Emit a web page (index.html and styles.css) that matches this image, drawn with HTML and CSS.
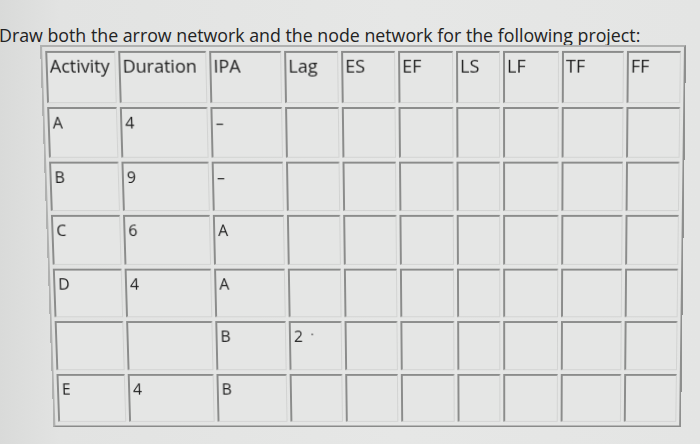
FILE: index.html
```html
<!DOCTYPE html>
<html>
<head>
<meta charset="utf-8">
<link rel="stylesheet" href="styles.css">
</head>
<body>
<div class="page">
  <p class="title">Draw both the arrow network and the node network for the following project:</p>
  <table class="grid">
    <colgroup>
      <col class="c-act"><col class="c-dur"><col class="c-ipa"><col class="c-lag"><col class="c-es">
      <col class="c-ef"><col class="c-ls"><col class="c-lf"><col class="c-tf"><col class="c-ff">
    </colgroup>
    <tr class="head">
      <td>Activity</td><td>Duration</td><td>IPA</td><td>Lag</td><td>ES</td>
      <td>EF</td><td>LS</td><td>LF</td><td>TF</td><td>FF</td>
    </tr>
    <tr><td>A</td><td>4</td><td>–</td><td></td><td></td><td></td><td></td><td></td><td></td><td></td></tr>
    <tr><td>B</td><td>9</td><td>–</td><td></td><td></td><td></td><td></td><td></td><td></td><td></td></tr>
    <tr><td>C</td><td>6</td><td>A</td><td></td><td></td><td></td><td></td><td></td><td></td><td></td></tr>
    <tr><td>D</td><td>4</td><td>A</td><td></td><td></td><td></td><td></td><td></td><td></td><td></td></tr>
    <tr><td></td><td></td><td>B</td><td>2 <span class="mark">·</span></td><td></td><td></td><td></td><td></td><td></td><td></td></tr>
    <tr><td>E</td><td>4</td><td>B</td><td></td><td></td><td></td><td></td><td></td><td></td><td></td></tr>
  </table>
</div>
</body>
</html>
```

FILE: styles.css
```css
html, body {
  margin: 0;
  padding: 0;
}
body {
  width: 700px;
  height: 444px;
  overflow: hidden;
  background: linear-gradient(90deg, #d9dad9 0px, #e2e3e2 60px, #e6e7e6 400px, #e4e5e4 700px);
  font-family: "Open Sans", "DejaVu Sans", sans-serif;
  color: #1e1e1e;
}
.page {
  padding-top: 25px;
  height: 419px;
}
.title {
  margin: 0 0 0 -1px;
  font-size: 17.8px;
  line-height: 20px;
  white-space: nowrap;
  color: #222;
}
.grid {
  margin-left: 40px;
  border-collapse: separate;
  border-spacing: 3px 4px;
  border-style: solid;
  border-width: 2px;
  border-color: #b0b1b0 #8e8f8e #8a8b8a #b0b1b0;
  table-layout: fixed;
  width: 646px;
  transform-origin: 473px 0;
  transform: perspective(2000px) rotateX(-8.5deg);
}
.grid td {
  box-sizing: border-box;
  height: 51.5px;
  padding: 3px 0 0 3px;
  vertical-align: top;
  border-style: solid;
  border-width: 2px 1px 1px 2px;
  border-color: #8b8c8b #d2d3d2 #d2d3d2 #8b8c8b;
  background: #e5e6e5;
  font-size: 16px;
  line-height: 22px;
  white-space: nowrap;
  overflow: hidden;
}
.grid tr.head td {
  height: 53px;
  font-size: 18px;
  padding-top: 2px;
  padding-left: 2px;
  line-height: 22px;
}
.c-act { width: 70px; }
.c-dur { width: 88px; }
.c-ipa { width: 72px; }
.c-lag { width: 54px; }
.c-es { width: 54px; }
.c-ef { width: 55px; }
.c-ls { width: 44px; }
.c-lf { width: 56px; }
.c-tf { width: 62px; }
.c-ff { width: 54px; }
.mark {
  font-size: 12px;
  margin-left: 4px;
  position: relative;
  top: -3px;
}
```
